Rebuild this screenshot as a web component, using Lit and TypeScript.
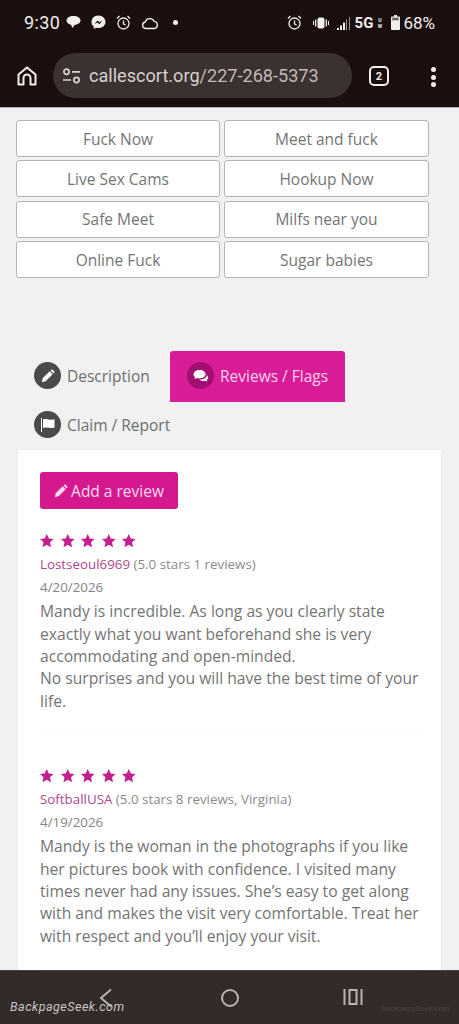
import { LitElement, html, css, svg } from "lit";
import { customElement } from "lit/decorators.js";

const links = ["Fuck Now", "Meet and fuck", "Live Sex Cams", "Hookup Now", "Safe Meet", "Milfs near you", "Online Fuck", "Sugar babies"];

const pencil = svg`<path d="M1 15l.9-4.300L10 2.600l3.400 3.400-8.100 8.100zM11 1.600l.8-.8c.4-.4 1-.4 1.400 0l2 2c.4.4.4 1 0 1.400l-.8.8z" fill="currentColor"/>`;
const star = html`<svg class="star" viewBox="0 0 24 24"><path d="M12 1.500l3.200 7 7.300.9-5.400 5.100 1.500 7.600-6.600-3.800-6.600 3.800 1.500-7.600L1.500 9.400l7.300-.9z" fill="currentColor"/></svg>`;

const reviews = [
  {
    name: "Lostseoul6969",
    meta: "(5.0 stars 1 reviews)",
    date: "4/20/2026",
    body: ["Mandy is incredible. As long as you clearly state exactly what you want beforehand she is very accommodating and open-minded.", "No surprises and you will have the best time of your life."],
  },
  {
    name: "SoftballUSA",
    meta: "(5.0 stars 8 reviews, Virginia)",
    date: "4/19/2026",
    body: ["Mandy is the woman in the photographs if you like her pictures book with confidence. I visited many times never had any issues. She’s easy to get along with and makes the visit very comfortable. Treat her with respect and you’ll enjoy your visit."],
  },
];

@customElement("app-root")
export class AppRoot extends LitElement {
  static styles = css`
    :host { display: block; width: 459px; height: 1024px; overflow: hidden; position: relative; font-family: "Open Sans", sans-serif; background: #f1f1f1; color: #6b6b6b; }
    .page { display: flex; flex-direction: column; height: 1024px; }
    .chrome { background: #1a0f0e; height: 108px; flex: none; border-bottom: 1px solid #b5b1b0; box-sizing: border-box; color: #f2eeec; }
    .status { height: 45px; display: flex; align-items: center; justify-content: space-between; padding: 0 24px 0 24px; box-sizing: border-box; font-family: Roboto, sans-serif; }
    .status-l, .status-r { display: flex; align-items: center; }
    .status-l { gap: 10px; }
    .time { font-size: 18px; letter-spacing: .4px; margin-right: -4px; }
    .status-r { gap: 3px; }
    .pct { font-size: 17px; }
    .g { font-size: 15px; font-weight: 700; margin-left: 2px; }
    .uw { font-size: 5px; font-weight: 700; line-height: 6px; width: 7px; text-align: center; }
    .dot { width: 5px; height: 5px; border-radius: 50%; background: currentColor; margin-left: 4px; }
    .sep-alarm { margin-right: 8px; }
    .sep-vib { margin-right: 5px; }
    .batt { margin-left: 5px; }
    .toolbar { height: 62px; display: flex; align-items: flex-start; }
    .home { margin: 21px 0 0 17px; flex: none; }
    .url { width: 299px; height: 45px; margin: 8px 0 0 16px; border-radius: 23px; background: #3a3130; display: flex; align-items: center; padding-left: 9px; box-sizing: border-box; font-family: Roboto, sans-serif; font-size: 18.100px; color: #d8d2d0; flex: none; }
    .url svg { margin-right: 8px; }
    .url span { color: #c0b9b7; }
    .tabcount { width: 20px; height: 20px; box-sizing: border-box; margin: 21px 0 0 17px; border: 2px solid #f2eeec; border-radius: 5px; display: flex; align-items: center; justify-content: center; font: 700 11px Roboto, sans-serif; flex: none; }
    .dots { margin: 22px 0 0 42px; display: flex; flex-direction: column; gap: 2.500px; }
    .dots i { width: 5px; height: 5px; border-radius: 50%; background: #f2eeec; display: block; }

    .content { flex: 1; min-height: 0; overflow: hidden; }
    .grid { display: grid; grid-template-columns: 204px 205px; column-gap: 4px; row-gap: 3.400px; padding: 12px 0 0 16px; }
    .link { height: 37px; box-sizing: border-box; background: #fff; border: 1px solid #b4b4b4; border-radius: 3px; display: flex; align-items: center; justify-content: center; font-size: 15.500px; color: #757575; }

    .tabs { display: flex; flex-wrap: wrap; margin: 73px 0 0 17px; width: 425px; }
    .tab { height: 51px; display: flex; align-items: center; gap: 6px; padding: 0 17px 2px; font-size: 15.500px; box-sizing: border-box; color: #6e6e6e; }
    .tab.desc { width: 153px; }
    .tab.active { width: 175px; background: #d91c97; color: #fbd3ec; border-radius: 3px 3px 0 0; padding: 0 0 2px 17px; }
    .tab.claim { width: 200px; height: 47px; }
    .ico { width: 27px; height: 27px; border-radius: 50%; background: #4a4a4a; color: #fff; display: flex; align-items: center; justify-content: center; flex: none; }
    .active .ico { background: #a10f70; }

    .card { margin-left: 17px; width: 425px; background: #fff; border-left: 1px solid #ececec; border-right: 1px solid #ececec; border-top: 1px solid #ececec; box-sizing: border-box; padding: 22px 18px 0 22px; height: 600px; }
    .add { width: 138px; height: 37px; background: #d4198f; color: #fcdcf1; border-radius: 3px; display: flex; align-items: center; justify-content: center; gap: 3px; font-size: 15.500px; }
    .review { padding-bottom: 21px; border-bottom: 1px solid #fafafa; margin-bottom: 32px; }
    .add + .review { margin-top: 22px; }
    .stars { display: flex; gap: 5.100px; color: #c41e90; height: 20px; align-items: center; margin-left: -1px; }
    .star { width: 15.500px; height: 15.500px; display: block; }
    .who { font-size: 13.350px; line-height: 23px; color: #8a8a8a; margin-top: 2px; white-space: nowrap; }
    .who b { font-weight: 400; color: #b0468f; }
    .date { font-size: 13.350px; line-height: 22px; color: #858585; }
    .body { font-size: 15.650px; line-height: 22.400px; color: #747474; margin: 2px 0 0; }
    .body p { margin: 0; }

    .nav { height: 54px; flex: none; background: #332b29; color: #b9b3b1; border-top: 1px solid #4a4341; box-sizing: border-box; position: relative; }
    .nav svg { position: absolute; top: 17px; }
    .wm { position: absolute; left: 10px; top: 28px; font-size: 12.500px; font-style: italic; letter-spacing: .5px; color: #c9c5c3; font-family: Roboto, sans-serif; }
    .wm2 { position: absolute; left: 381px; top: 33px; font-size: 7.500px; font-style: italic; color: #4a4240; font-family: Roboto, sans-serif; letter-spacing: .3px; }
  `;

  render() {
    return html`<div class="page">
      <header class="chrome">
        <div class="status">
          <div class="status-l">
            <span class="time">9:30</span>
            <svg width="15" height="15" viewBox="0 0 15 15"><path d="M7.500 1C3.500 1 .5 2.800.5 5.500c0 2.200 2 3.800 4.500 4.300L6.500 13l2-3.100C11.500 9.500 14.500 8 14.500 5.500 14.500 2.800 11.500 1 7.500 1z" fill="currentColor"/></svg>
            <svg width="15" height="15" viewBox="0 0 15 15"><path d="M7.500.5C3.400.5.5 3.400.5 7c0 2 .9 3.600 2.300 4.700V14l2.200-1.200c.8.2 1.600.3 2.500.3 4.100 0 7-2.900 7-6.100S11.600.5 7.500.5z" fill="currentColor"/><path d="M3.500 9l3-3.500 2 1.800 3-1.800-3 3.700-2-1.800z" fill="#1a0f0e"/></svg>
            <svg width="15" height="16" viewBox="0 0 15 16" fill="none" stroke="currentColor" stroke-width="1.300"><circle cx="7.500" cy="8.500" r="5.500"/><path d="M7.500 5.500v3.300l2 1.200M1 3.500L3.500 1M14 3.500L11.500 1"/></svg>
            <svg width="18" height="14" viewBox="0 0 18 14" fill="none" stroke="currentColor" stroke-width="1.300"><path d="M4.500 12.500a3.300 3.300 0 0 1-.3-6.500 4.800 4.800 0 0 1 9-.6 3.600 3.600 0 0 1 .3 7.100z"/></svg>
            <span class="dot"></span>
          </div>
          <div class="status-r">
            <svg class="sep-alarm" width="15" height="16" viewBox="0 0 15 16" fill="none" stroke="currentColor" stroke-width="1.300"><circle cx="7.500" cy="8.500" r="5.500"/><path d="M7.500 5.500v3.300l2 1.200M1 3.500L3.500 1M14 3.500L11.500 1"/></svg>
            <svg class="sep-vib" width="16" height="12" viewBox="0 0 16 12" fill="currentColor"><rect x="4.500" y="0.500" width="7" height="11" rx="2"/><rect x="2" y="2.500" width="1.300" height="7"/><rect x="12.700" y="2.500" width="1.300" height="7"/><rect x="0" y="4" width="1" height="4"/><rect x="15" y="4" width="1" height="4"/></svg>
            <svg width="13" height="14" viewBox="0 0 13 14"><path d="M0 14V12h2v2zM3 14V9.500h2V14zM6 14V6.500h2V14z" fill="currentColor"/><path d="M9 14V3.500h1V14zM12 14V1h1v13z" fill="#9a9492"/></svg>
            <span class="g">5G</span><span class="uw">U<br />W</span>
            <svg class="batt" width="9" height="15" viewBox="0 0 9 15"><path d="M3 0h3v1.500h2a1 1 0 0 1 1 1V14a1 1 0 0 1-1 1H1a1 1 0 0 1-1-1V2.500a1 1 0 0 1 1-1h2z" fill="currentColor"/><rect x="1.200" y="2.700" width="6.600" height="2.600" fill="#6a6260"/></svg>
            <span class="pct">68%</span>
          </div>
        </div>
        <div class="toolbar">
          <svg class="home" width="20" height="20" viewBox="0 0 20 20" fill="none" stroke="currentColor" stroke-width="2" stroke-linejoin="round"><path d="M1.500 8.500L10 1.500l8.500 7V18.500h-5V12a3.500 3.500 0 0 0-7 0v6.500h-5z"/></svg>
          <div class="url">
            <svg width="19" height="16" viewBox="0 0 19 16" fill="none" stroke="currentColor" stroke-width="1.700"><circle cx="4.500" cy="3.800" r="2.600"/><path d="M10 3.800h8M1 12h8"/><circle cx="14.500" cy="12" r="2.600"/></svg>
            callescort.org<span>/227-268-5373</span>
          </div>
          <div class="tabcount">2</div>
          <div class="dots"><i></i><i></i><i></i></div>
        </div>
      </header>

      <main class="content">
        <div class="grid">${links.map((l) => html`<div class="link">${l}</div>`)}</div>
        <div class="tabs">
          <div class="tab desc"><span class="ico"><svg width="14" height="14" viewBox="0 0 16 16">${pencil}</svg></span>Description</div>
          <div class="tab active"><span class="ico"><svg width="16" height="14" viewBox="0 0 16 14"><path d="M6.500 1C3 1 .5 3 .5 5.300c0 1.200.7 2.300 1.800 3-.1.700-.5 1.300-1 1.800 1 0 2-.4 2.700-1 .8.200 1.600.3 2.500.3 3.500 0 6-1.900 6-4.100S10 1 6.500 1z" fill="currentColor"/><path d="M14 5.500c.1 2.800-3 5-6.500 5l-1 0c.9 1 2.400 1.500 4 1.500.6 0 1.200-.1 1.800-.2.6.5 1.400.8 2.200.8-.4-.4-.7-.9-.8-1.500.9-.6 1.500-1.500 1.500-2.600 0-1.100-.8-2.100-1.900-2.600z" fill="currentColor"/></svg></span>Reviews / Flags</div>
          <div class="tab claim"><span class="ico"><svg width="15" height="14" viewBox="0 0 15 14"><path d="M1 0h1v14H1z" fill="currentColor"/><path d="M3 1.500c3-1.500 5 1 9 0h2.500v8c-4 1.500-7-1-11.500.5z" fill="currentColor"/></svg></span>Claim / Report</div>
        </div>
        <section class="card">
          <div class="add"><svg width="14" height="14" viewBox="0 0 16 16">${pencil}</svg>Add a review</div>
          ${reviews.map(
            (r) => html`<article class="review">
              <div class="stars">${star}${star}${star}${star}${star}</div>
              <div class="who"><b>${r.name}</b> ${r.meta}</div>
              <div class="date">${r.date}</div>
              <div class="body">${r.body.map((p) => html`<p>${p}</p>`)}</div>
            </article>`
          )}
        </section>
      </main>

      <nav class="nav">
        <svg style="left:99px" width="14" height="20" viewBox="0 0 14 20" fill="none" stroke="currentColor" stroke-width="2"><path d="M12 1.500L2 10l10 8.500"/></svg>
        <svg style="left:220px" width="20" height="20" viewBox="0 0 20 20" fill="none" stroke="currentColor" stroke-width="2"><circle cx="10" cy="10" r="8"/></svg>
        <svg style="left:343px" width="20" height="18" viewBox="0 0 20 18" fill="none" stroke="currentColor" stroke-width="2"><path d="M1.500 1v16M18.500 1v16"/><rect x="6.500" y="2" width="7" height="14"/></svg>
        <span class="wm">BackpageSeek.com</span>
        <span class="wm2">BackpageSeek.com</span>
      </nav>
    </div>`;
  }
}
